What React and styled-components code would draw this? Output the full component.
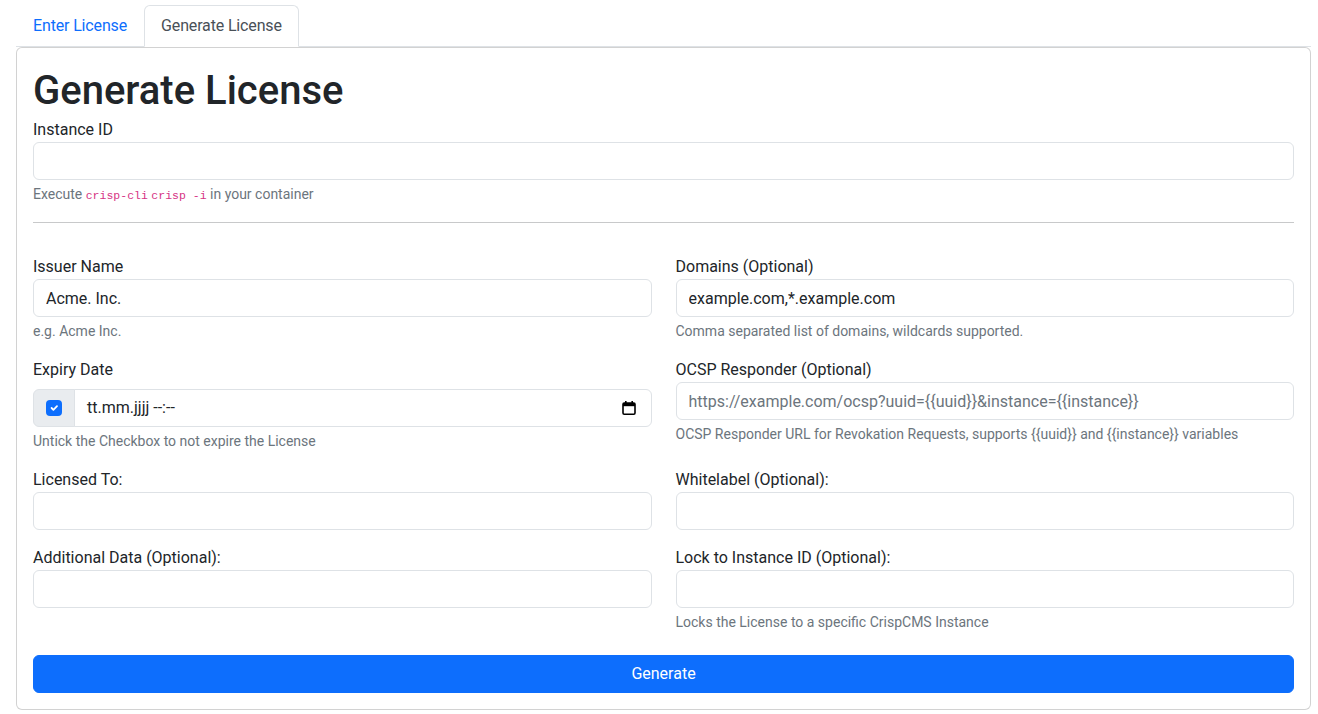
import React from 'react';
import styled, { createGlobalStyle } from 'styled-components';

const GlobalStyle = createGlobalStyle`
    * { box-sizing: border-box; }
    body {
        margin: 0;
        background: #fff;
        color: #212529;
        font-family: Roboto, "Noto Sans", "Liberation Sans", sans-serif;
        font-size: 16px;
        line-height: 1.5;
    }
`

const Page = styled.div`
    padding: 5px 7px 4px 16px;
`

const Tabs = styled.ul`
    display: flex;
    list-style: none;
    margin: 0;
    padding: 0;
    border-bottom: 1px solid #dee2e6;
`

const Tab = styled.li`
    margin-bottom: -1px;
    padding: 8px 16px;
    line-height: 24px;
    letter-spacing: -0.15px;
    border: 1px solid transparent;
    border-top-left-radius: 6px;
    border-top-right-radius: 6px;
    color: ${p => p.active ? '#495057' : '#0d6efd'};
    background: ${p => p.active ? '#fff' : 'transparent'};
    border-color: ${p => p.active ? '#dee2e6 #dee2e6 #fff' : 'transparent'};
    cursor: pointer;
`

const Card = styled.div`
    border: 1px solid rgba(0, 0, 0, 0.175);
    border-radius: 6px;
    padding: 16px;
    background: #fff;
`

const Title = styled.h1`
    margin: 0 0 3px;
    padding-top: 3px;
    font-size: 40px;
    font-weight: 500;
    line-height: 48px;
`

const Label = styled.label`
    display: block;
    line-height: 24px;
    margin-bottom: ${p => p.spaced ? '7px' : '0'};
`

const Input = styled.input`
    display: block;
    width: 100%;
    height: 38px;
    padding: 6px 12px;
    font: inherit;
    color: #212529;
    border: 1px solid #dee2e6;
    border-radius: 6px;
    background: #fff;
    outline: none;

    &::placeholder {
        color: #6c757d;
        opacity: 1;
    }
`

const Help = styled.div`
    margin-top: 4px;
    font-size: 14px;
    line-height: 21px;
    color: #6c757d;
`

const Code = styled.code`
    font-family: "Liberation Mono", "DejaVu Sans Mono", monospace;
    font-size: 11.5px;
    color: #d63384;
`

const Divider = styled.hr`
    margin: 16px 0;
    border: 0;
    border-top: 1px solid #c8c9ca;
`

const Row = styled.div`
    display: grid;
    grid-template-columns: 1fr 1fr;
    column-gap: 24px;
    padding-top: ${p => p.first ? '16px' : '0'};
`

const Group = styled.div`
    margin-bottom: 16px;
    min-width: 0;
`

const InputGroup = styled.div`
    display: flex;
    height: 38px;
`

const Addon = styled.div`
    display: flex;
    align-items: center;
    padding: 0 12px;
    background: #e9ecef;
    border: 1px solid #dee2e6;
    border-radius: 6px 0 0 6px;
`

const Check = styled.span`
    display: flex;
    align-items: center;
    justify-content: center;
    width: 16px;
    height: 16px;
    border-radius: 4px;
    background: #0d6efd;
`

const DateField = styled.div`
    flex: 1;
    display: flex;
    align-items: center;
    justify-content: space-between;
    margin-left: -1px;
    padding: 0 15px 0 12px;
    border: 1px solid #dee2e6;
    border-radius: 0 6px 6px 0;
    color: #212529;
`

const SubmitButton = styled.button`
    display: block;
    width: 100%;
    height: 38px;
    margin-top: 6px;
    padding: 6px 12px;
    font: inherit;
    color: #fff;
    background: #0d6efd;
    border: 1px solid #0d6efd;
    border-radius: 6px;
    cursor: pointer;
`

const CalendarIcon = () => (
    <svg width="14" height="14" viewBox="0 0 14 14">
        <rect x="3" y="0" width="1.6" height="2.5" fill="#000" />
        <rect x="9.4" y="0" width="1.6" height="2.5" fill="#000" />
        <rect x="1" y="2" width="12" height="11.2" rx="1.2" fill="none" stroke="#000" strokeWidth="1.6" />
        <rect x="1" y="2" width="12" height="3.2" fill="#000" />
    </svg>
)

const CheckMark = () => (
    <svg width="12" height="12" viewBox="0 0 20 20">
        <path d="M6 10l3 3 6-6" fill="none" stroke="#fff" strokeWidth="3" strokeLinecap="round" strokeLinejoin="round" />
    </svg>
)

export default function App() {
    return (
        <Page>
            <GlobalStyle />
            <Tabs>
                <Tab>Enter License</Tab>
                <Tab active>Generate License</Tab>
            </Tabs>
            <Card>
                <Title>Generate License</Title>
                <Label>Instance ID</Label>
                <Input />
                <Help>Execute <Code>crisp-cli</Code>&nbsp;<Code>crisp -i</Code> in your container</Help>
                <Divider />

                <Row first>
                    <Group>
                        <Label>Issuer Name</Label>
                        <Input defaultValue="Acme. Inc." />
                        <Help>e.g. Acme Inc.</Help>
                    </Group>
                    <Group>
                        <Label>Domains (Optional)</Label>
                        <Input defaultValue="example.com,*.example.com" />
                        <Help>Comma separated list of domains, wildcards supported.</Help>
                    </Group>
                </Row>

                <Row>
                    <Group>
                        <Label spaced>Expiry Date</Label>
                        <InputGroup>
                            <Addon>
                                <Check><CheckMark /></Check>
                            </Addon>
                            <DateField>
                                <span>tt.mm.jjjj --:--</span>
                                <CalendarIcon />
                            </DateField>
                        </InputGroup>
                        <Help>Untick the Checkbox to not expire the License</Help>
                    </Group>
                    <Group>
                        <Label>OCSP Responder (Optional)</Label>
                        <Input placeholder="https://example.com/ocsp?uuid={{uuid}}&instance={{instance}}" />
                        <Help>OCSP Responder URL for Revokation Requests, supports {'{{uuid}}'} and {'{{instance}}'} variables</Help>
                    </Group>
                </Row>

                <Row>
                    <Group>
                        <Label>Licensed To:</Label>
                        <Input />
                    </Group>
                    <Group>
                        <Label>Whitelabel (Optional):</Label>
                        <Input />
                    </Group>
                </Row>

                <Row>
                    <Group>
                        <Label>Additional Data (Optional):</Label>
                        <Input />
                    </Group>
                    <Group>
                        <Label>Lock to Instance ID (Optional):</Label>
                        <Input />
                        <Help>Locks the License to a specific CrispCMS Instance</Help>
                    </Group>
                </Row>

                <SubmitButton>Generate</SubmitButton>
            </Card>
        </Page>
    )
}
